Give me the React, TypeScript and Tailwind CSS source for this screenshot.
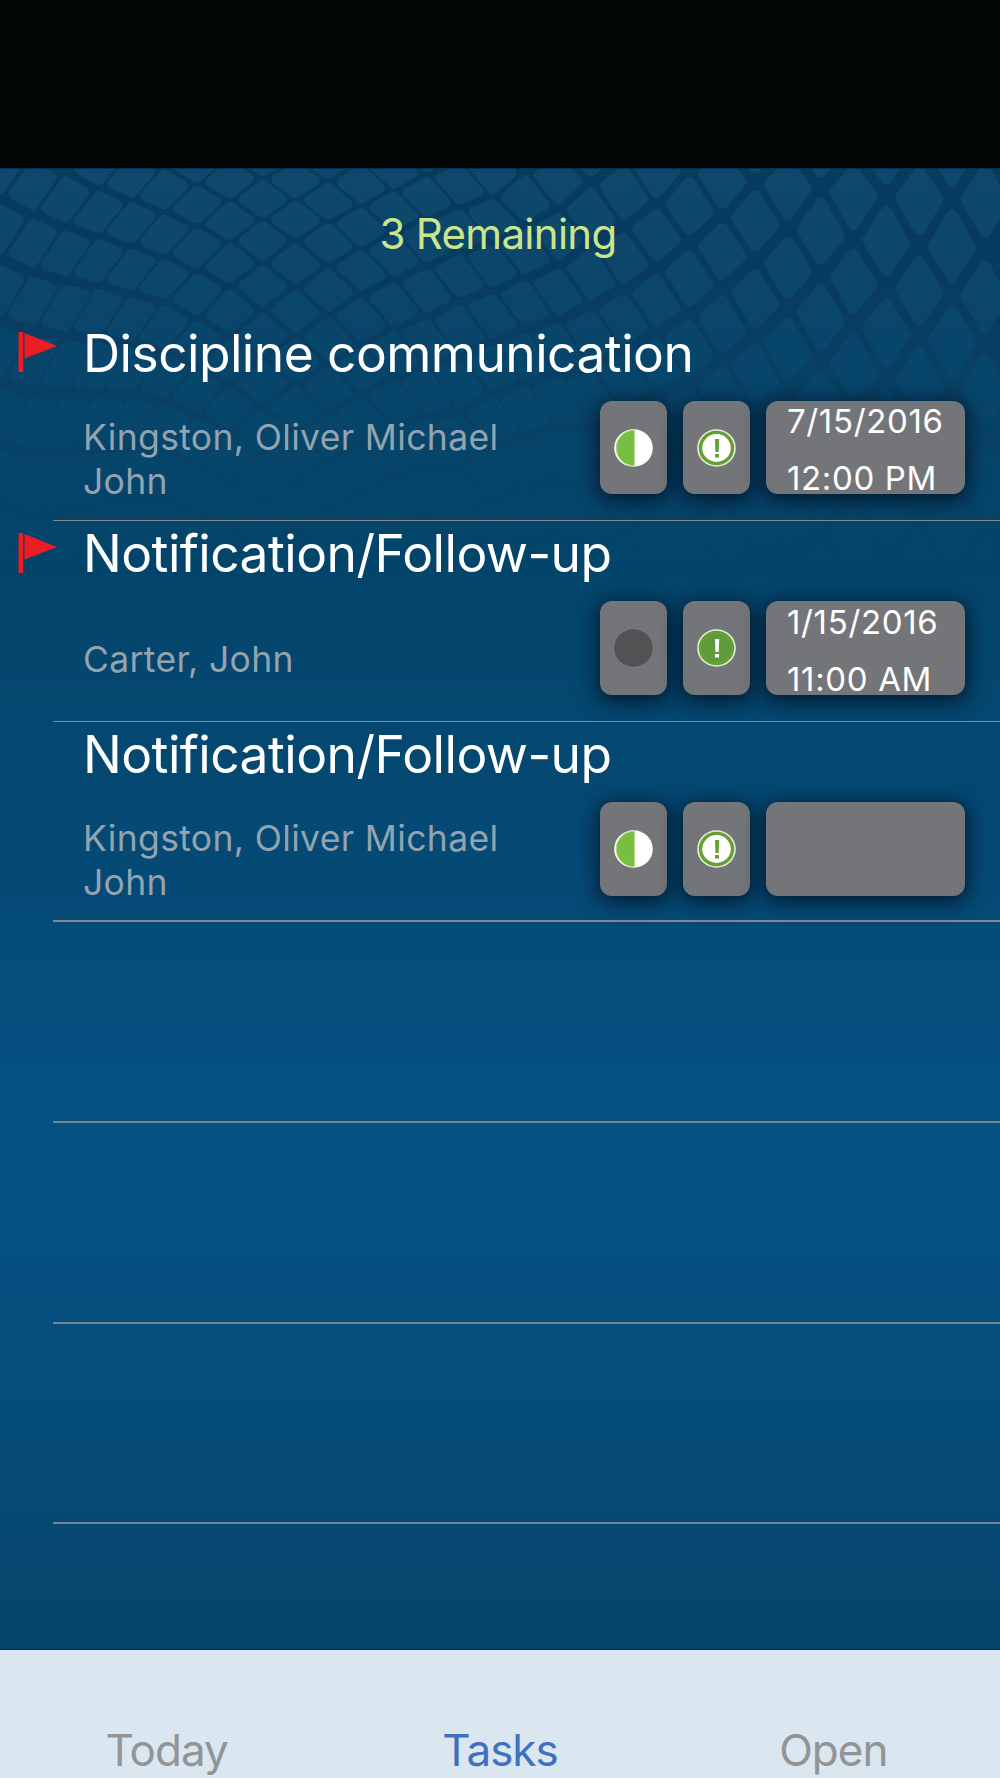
import React from "react";
import clsx from "clsx";

type Progress = "half" | "idle";
type Priority = "outline" | "solid";

type Task = {
  title: string;
  patient: string;
  flagged: boolean;
  progress: Progress;
  priority: Priority;
  date?: string;
  time?: string;
};

const tasks: Task[] = [
  {
    title: "Discipline communication",
    patient: "Kingston, Oliver Michael John",
    flagged: true,
    progress: "half",
    priority: "outline",
    date: "7/15/2016",
    time: "12:00 PM",
  },
  {
    title: "Notification/Follow-up",
    patient: "Carter, John",
    flagged: true,
    progress: "idle",
    priority: "solid",
    date: "1/15/2016",
    time: "11:00 AM",
  },
  {
    title: "Notification/Follow-up",
    patient: "Kingston, Oliver Michael John",
    flagged: false,
    progress: "half",
    priority: "outline",
  },
];

const tabs = ["Today", "Tasks", "Open"];

// Mesh columns: index of the first strand, then the cell centers down the column
const COLUMN_WIDTH = 32.83;
const meshColumns: [number, number[]][] = [
  [-1, [-30, 145, 335, 525]],
  [-1, [10, 187, 375, 560]],
  [-1, [60, 230, 405, 585, 770, 955]],
  [-1, [100, 262, 425, 595, 770]],
  [-2, [-5, 138, 285, 433, 600]],
  [-2, [35, 170, 310, 457, 610]],
  [-2, [70, 205, 338, 480, 630]],
  [-3, [-5, 115, 245, 385, 530]],
  [-3, [40, 165, 288, 435, 580]],
  [-3, [98, 222, 358, 505, 650]],
  [-4, [45, 158, 292, 435, 580]],
  [-4, [105, 228, 372, 520, 665]],
  [-5, [55, 185, 308, 460, 610]],
  [-6, [15, 130, 265, 415, 560]],
  [-6, [92, 225, 375, 525]],
  [-7, [55, 190, 325, 490]],
  [-8, [25, 160, 300, 450, 605]],
  [-8, [97, 257, 410, 570]],
  [-9, [45, 210, 380, 540]],
  [-9, [140, 325, 510]],
  [-10, [80, 280, 460]],
  [-11, [20, 205, 405, 590]],
  [-11, [120, 340, 545]],
  [-12, [45, 255, 475, 685]],
  [-12, [165, 400, 620]],
  [-13, [70, 305, 550]],
  [-13, [195, 455]],
  [-14, [95, 345, 600]],
  [-14, [225, 500]],
  [-15, [105, 375, 650]],
  [-15, [240, 530]],
  [-16, [105, 395, 670]],
  [-16, [255, 540]],
];

const centerAt = (column: number, strand: number) => {
  const [first, ys] = meshColumns[column];
  const n = strand - first;
  const last = ys.length - 1;
  let y = ys[n];
  if (n < 0) {
    y = ys[0] + n * (ys[1] - ys[0]);
  } else if (n > last) {
    y = ys[last] + (n - last) * (ys[last] - ys[last - 1]);
  }
  return y / 3 - 3;
};

const buildMesh = () => {
  const cells: string[] = [];
  const side = 0.6;
  const tip = 0.65;
  for (let c = 1; c < meshColumns.length - 1; c++) {
    const first = meshColumns[c][0];
    // the first table column sits off screen, the second on the left edge
    const x = (c - 1) * COLUMN_WIDTH;
    for (let s = first - 2; s < first + 9; s++) {
      const y = centerAt(c, s);
      const top = (y + centerAt(c, s - 1)) / 2;
      const bottom = (y + centerAt(c, s + 1)) / 2;
      const left = (centerAt(c - 1, s) + centerAt(c - 1, s + 1)) / 2;
      const right = (centerAt(c + 1, s) + centerAt(c + 1, s - 1)) / 2;
      const w = COLUMN_WIDTH * 0.57;
      cells.push(
        `M${x - w} ${y + (left - y) * side}L${x} ${y + (top - y) * tip}L${x + w} ${
          y + (right - y) * side
        }L${x} ${y + (bottom - y) * tip}Z`
      );
    }
  }
  return cells.join("");
};

const meshPath = buildMesh();

const MeshBackground = () => (
  <svg
    className="absolute inset-x-0 top-0 h-[420px] w-full [mask-image:linear-gradient(to_bottom,rgba(0,0,0,0.95)_0px,rgba(0,0,0,0.9)_110px,rgba(0,0,0,0.65)_180px,rgba(0,0,0,0.35)_260px,rgba(0,0,0,0.2)_320px,transparent_410px)]"
    viewBox="0 0 1000 420"
  >
    <defs>
      <linearGradient id="cell" x1="0" y1="0" x2="0" y2="420" gradientUnits="userSpaceOnUse">
        <stop offset="0" stopColor="#0f486b" />
        <stop offset="0.5" stopColor="#07456a" />
        <stop offset="1" stopColor="#04456b" />
      </linearGradient>
    </defs>
    <rect width="1000" height="420" fill="#083a5f" />
    <path
      d={meshPath}
      fill="url(#cell)"
      stroke="url(#cell)"
      strokeWidth="10.5"
      strokeLinejoin="round"
    />
  </svg>
);

const FlagIcon = () => (
  <svg className="h-10 w-10" viewBox="0 0 40 40" fill="#ee1d23">
    <rect x="0.5" y="0" width="4.7" height="40" />
    <path d="M6.5 1L39 14L6.5 26.5Z" />
  </svg>
);

const ProgressIcon = ({ progress }: { progress: Progress }) => (
  <svg className="h-[38px] w-[39px]" viewBox="0 0 39 38">
    {progress === "half" ? (
      <>
        <ellipse cx="19.5" cy="19" rx="19.3" ry="18.8" fill="#fff" />
        <path d="M20 1.2A18 17.8 0 0 0 20 36.8Z" fill="#78be43" />
        <path d="M20.3 1.2A18 17.8 0 0 0 20.3 36.8" fill="none" stroke="#b5dc7c" />
        <path d="M20.6 1V37" stroke="#b5dc7c" />
      </>
    ) : (
      <ellipse cx="19.5" cy="19" rx="19.2" ry="18.7" fill="#515254" />
    )}
  </svg>
);

const PriorityIcon = ({ priority }: { priority: Priority }) => {
  const solid = priority === "solid";
  return (
    <svg className="h-[38px] w-[39px]" viewBox="0 0 39 38">
      <ellipse cx="19.5" cy="19" rx="19.3" ry="18.8" fill="#e4efd6" />
      <ellipse
        cx="19.5"
        cy="19"
        rx="16"
        ry="15.6"
        fill={solid ? "#5f9a3c" : "#fff"}
        stroke={solid ? "#64a038" : "#669f35"}
        strokeWidth="3.4"
      />
      <path
        d="M18 10H22.2L21.7 23H18.4ZM18 25H22V28.6H18Z"
        fill={solid ? "#fff" : "#669f35"}
      />
    </svg>
  );
};

const Badge = ({
  className,
  children,
}: {
  className: string;
  children?: React.ReactNode;
}) => (
  <div
    className={clsx(
      "h-[93.5px] shrink-0 rounded-xl bg-[#747579] shadow-[0_4px_20px_3px_rgba(0,10,25,0.7)]",
      className
    )}
  >
    {children}
  </div>
);

const TaskRow = ({ task, thick }: { task: Task; thick: boolean }) => (
  <li className="flex h-[200.6px]">
    <div className="w-[53px] shrink-0 pt-[11.4px] pl-[18px]">{task.flagged && <FlagIcon />}</div>
    <div
      className={clsx(
        "min-w-0 flex-1 border-[#85898c] pl-[30px]",
        thick ? "border-b-2" : "border-b"
      )}
    >
      <h2 className="pt-[1.3px] text-[51.5px] leading-[62px] tracking-[-0.55px] whitespace-nowrap text-white">
        {task.title}
      </h2>
      <div className="flex items-start pt-[17px]">
        <div className="flex h-[118px] w-[517px] items-center text-[35.5px] leading-[44px] tracking-[0.35px] text-[#93a3af]">
          <p className="w-[440px]">{task.patient}</p>
        </div>
        <Badge className="mr-4 flex w-[67px] items-center justify-center">
          <ProgressIcon progress={task.progress} />
        </Badge>
        <Badge className="mr-4 flex w-[67px] items-center justify-center">
          <PriorityIcon priority={task.priority} />
        </Badge>
        <Badge className="w-[199px] pl-[21px] text-[33px] leading-[57px] tracking-[0.65px] text-white">
          <div className="-mt-[7.5px]">
            <p>{task.date}</p>
            <p>{task.time}</p>
          </div>
        </Badge>
      </div>
    </div>
  </li>
);

const App = () => {
  return (
    <div className="flex h-[1778px] w-[1000px] flex-col overflow-hidden bg-[#020607] font-['Inter',sans-serif]">
      <div className="h-[168px] shrink-0" />

      <main className="relative h-[1482px] shrink-0 overflow-hidden border-y border-[#06304f] bg-[linear-gradient(to_bottom,#0f486b_0px,#04456b_400px,#054a76_720px,#045081_900px,#045081_1080px,#064a74_1340px,#06446c_1480px)]">
        <MeshBackground />
        <div className="relative">
          <p className="h-[151.6px] pt-[39px] pr-[4px] text-center text-[42px] leading-[51px] tracking-[-0.7px] text-[#cbe58d]">
            3 Remaining
          </p>
          <ul>
            {tasks.map((task, index) => (
              <TaskRow key={index} task={task} thick={index === 2} />
            ))}
            {[0, 1, 2].map((row) => (
              <li key={row} className="ml-[53px] h-[200.6px] border-b-2 border-[#748790]" />
            ))}
          </ul>
        </div>
      </main>

      <nav className="grid h-[128px] shrink-0 grid-cols-3 bg-[#dae6f0] pt-[73px] text-center text-[44px] leading-[54px] tracking-[-1px]">
        {tabs.map((tab) => (
          <a key={tab} className={tab === "Tasks" ? "text-[#3f72bd]" : "text-[#929496]"}>
            {tab}
          </a>
        ))}
      </nav>
    </div>
  );
};

export default App;
